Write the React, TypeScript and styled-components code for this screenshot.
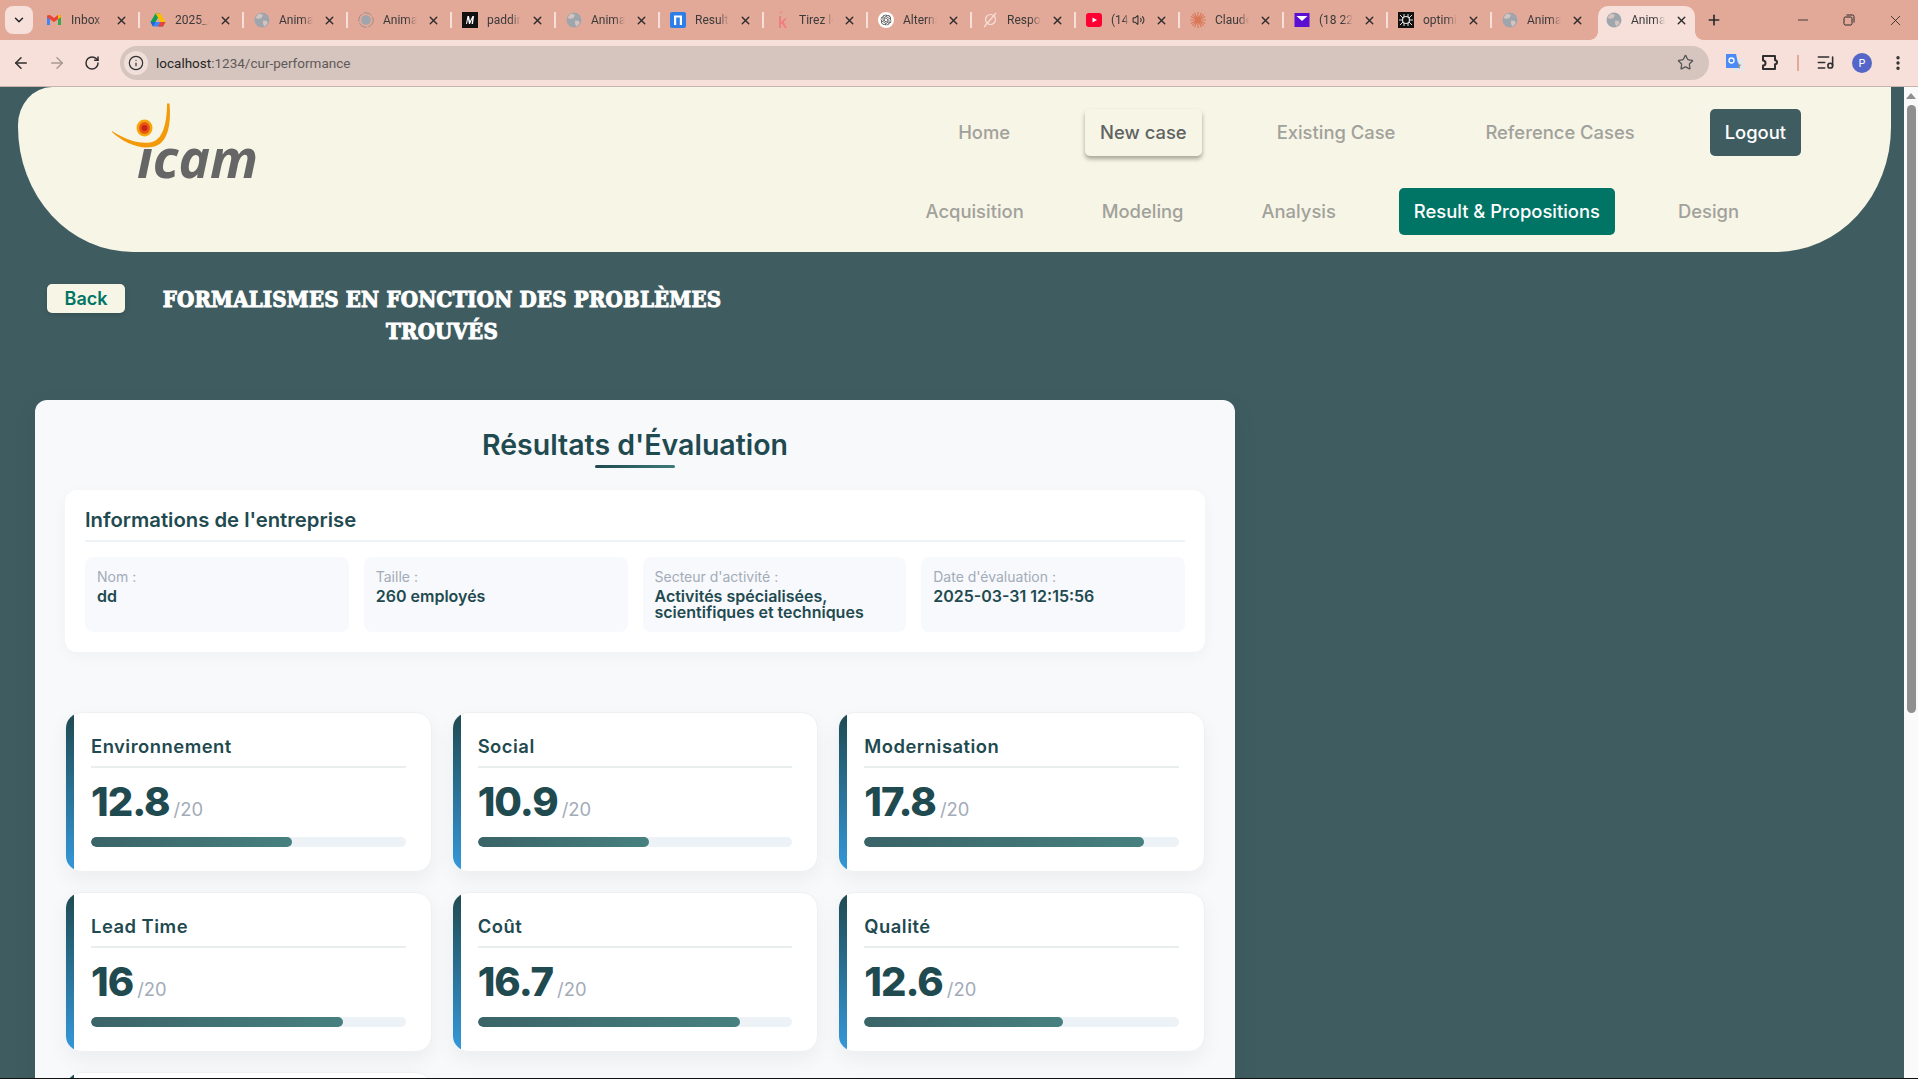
import React from "react";
import styled, { createGlobalStyle } from "styled-components";
import {
  ArrowLeft,
  ArrowRight,
  ChevronDown,
  Info,
  ListMusic,
  Minus,
  MoreVertical,
  Plus,
  RotateCw,
  Star,
  Volume2,
  X,
} from "lucide-react";
import { SiOpenai } from "react-icons/si";

const GlobalStyle = createGlobalStyle`
  html, body {
    margin: 0;
    height: 100%;
    overflow: hidden;
    background: #3f5d61;
  }
  * { box-sizing: border-box; }
`;

const Screen = styled.div`
  display: flex;
  flex-direction: column;
  width: 1918px;
  height: 1079px;
  overflow: hidden;
  font-family: Inter, "Liberation Sans", sans-serif;
  border-bottom: 1px solid #111;
`;

/* browser chrome */

const TabStrip = styled.div`
  display: flex;
  align-items: flex-end;
  height: 40px;
  flex: none;
  background: #e2a999;
  font-family: Roboto, "Liberation Sans", sans-serif;
`;

const TabSearch = styled.div`
  display: flex;
  align-items: center;
  justify-content: center;
  width: 28px;
  height: 28px;
  margin: 0 3px 6px 5px;
  border-radius: 8px;
  background: #f6e0d9;
  color: #222;
`;

const Tab = styled.div<{ $sep?: boolean }>`
  position: relative;
  display: flex;
  align-items: center;
  width: 104px;
  height: 40px;
  padding: 0 0 0 10px;
  font-size: 12px;
  color: #3a3a3a;

  &::after {
    content: "";
    display: ${({ $sep }) => ($sep ? "block" : "none")};
    position: absolute;
    right: 0;
    top: 12px;
    width: 2px;
    height: 16px;
    background: #f6e0d9;
  }
`;

const ActiveTab = styled(Tab)`
  width: 97px;
  height: 34px;
  margin: 0 3px 0 2px;
  padding: 0 0 6px 8px;
  background: #f6e0d9;
  border-radius: 10px 10px 0 0;

  &::before,
  &::after {
    content: "";
    display: block;
    position: absolute;
    top: auto;
    bottom: 0;
    width: 8px;
    height: 8px;
  }
  &::before {
    left: -8px;
    right: auto;
    background: radial-gradient(circle at 0 0, transparent 7.5px, #f6e0d9 8px);
  }
  &::after {
    right: -8px;
    background: radial-gradient(circle at 100% 0, transparent 7.5px, #f6e0d9 8px);
  }
`;

const TabIcon = styled.span`
  display: flex;
  width: 16px;
  height: 16px;
  flex: none;
  align-items: center;
  justify-content: center;
`;

const TabTitle = styled.span<{ $short?: boolean }>`
  width: ${({ $short }) => ($short ? 18 : 34)}px;
  margin-left: 9px;
  white-space: nowrap;
  overflow: hidden;
  -webkit-mask-image: linear-gradient(90deg, #000 70%, transparent);
  mask-image: linear-gradient(90deg, #000 70%, transparent);
`;

const TabAudio = styled.span`
  display: flex;
  margin-left: 3px;
  width: 13px;
  color: #333;
`;

const TabClose = styled.span`
  display: flex;
  margin-left: 10px;
  color: #2b2b2b;
`;

const NewTab = styled.div`
  display: flex;
  align-self: center;
  margin-left: 8px;
  color: #2b2b2b;
`;

const WindowControls = styled.div`
  display: flex;
  align-self: center;
  margin-left: auto;
  color: #2b2b2b;
`;

const WindowButton = styled.span`
  display: flex;
  align-items: center;
  justify-content: center;
  width: 46px;
`;

const Toolbar = styled.div`
  display: flex;
  align-items: center;
  height: 47px;
  flex: none;
  padding: 0 0 1px 12px;
  background: #f6e0d9;
  border-bottom: 1px solid #c9b4ad;
`;

const NavIcon = styled.span<{ $dim?: boolean; $gap?: number }>`
  display: flex;
  margin-right: ${({ $gap }) => $gap ?? 18}px;
  color: ${({ $dim }) => ($dim ? "#a99a94" : "#2f2f2f")};
`;

const Omnibox = styled.div`
  display: flex;
  align-items: center;
  width: 1589px;
  height: 34px;
  margin: 0 17px 0 20px;
  padding: 0 15px 0 4px;
  border-radius: 17px;
  background: #d6c5be;
  font-family: Roboto, "Liberation Sans", sans-serif;
  font-size: 13.5px;
  color: #5f5a58;
`;

const SiteInfo = styled.span`
  display: flex;
  align-items: center;
  justify-content: center;
  width: 24px;
  height: 24px;
  margin-right: 8px;
  border-radius: 50%;
  background: #f0dfd9;
  color: #2f2f2f;
`;

const Host = styled.span`
  color: #262626;
`;

const StarSlot = styled.span`
  display: flex;
  margin-left: auto;
  color: #555;
`;

const ToolbarDivider = styled.span`
  width: 2px;
  height: 16px;
  margin-right: 17px;
  background: #e2a999;
`;

const Avatar = styled.span`
  display: flex;
  align-items: center;
  justify-content: center;
  width: 20px;
  height: 20px;
  margin-right: 17px;
  border-radius: 50%;
  background: #5566c8;
  color: #fff;
  font-size: 11px;
`;

/* page */

const Viewport = styled.div`
  display: flex;
  flex: 1;
  min-height: 0;
`;

const Page = styled.div`
  flex: 1;
  min-width: 0;
  overflow: hidden;
  background: #3f5d61;
`;

const Scrollbar = styled.div`
  display: flex;
  flex-direction: column;
  align-items: center;
  width: 14px;
  flex: none;
  background: #fafafa;
  padding-top: 6px;
`;

const ScrollArrow = styled.div`
  width: 0;
  height: 0;
  border-left: 5px solid transparent;
  border-right: 5px solid transparent;
  border-bottom: 6px solid #8f8f8f;
`;

const ScrollThumb = styled.div`
  width: 9px;
  height: 608px;
  margin-top: 6px;
  border-radius: 5px;
  background: #8f8f8f;
`;

const Header = styled.header`
  display: flex;
  justify-content: space-between;
  height: 165px;
  margin: 0 13px 0 18px;
  padding: 22px 90px 0 78px;
  background: #f7f5e6;
  border-radius: 34px 0 115px 115px / 38px 0 125px 125px;
`;

const LogoMark = styled.svg`
  flex: none;
  margin-top: -10px;
`;

const Nav = styled.nav`
  display: flex;
  flex-direction: column;
  align-items: flex-end;
  gap: 32px;
`;

const NavRow = styled.div<{ $gap: number; $inset?: number }>`
  display: flex;
  gap: ${({ $gap }) => $gap}px;
  margin-right: ${({ $inset }) => $inset ?? 0}px;
`;

const NavButton = styled.a<{ $variant?: "raised" | "dark" | "green" }>`
  display: flex;
  align-items: center;
  height: 47px;
  padding: 0 15px 2px;
  border-radius: 5px;
  font-size: 18.4px;
  font-weight: 500;
  color: ${({ $variant }) =>
    $variant === "raised" ? "#5f6363" : $variant ? "#fff" : "#a1a19b"};
  background: ${({ $variant }) =>
    $variant === "dark" ? "#3f5d61" : $variant === "green" ? "#007566" : "transparent"};
  box-shadow: ${({ $variant }) =>
    $variant === "raised" ? "0 3px 4px rgba(70, 70, 50, 0.45)" : "none"};
`;

const TitleRow = styled.div`
  display: flex;
  align-items: flex-start;
  padding: 32px 0 0 47px;
`;

const BackButton = styled.button`
  width: 78px;
  height: 29px;
  border: 0;
  padding: 0;
  border-radius: 5px;
  background: #f7f5e6;
  color: #007566;
  font: 600 18px Inter, sans-serif;
  box-shadow: 0 2px 5px rgba(0, 0, 0, 0.15);
`;

const PageTitle = styled.h1`
  width: 590px;
  margin: -1px 0 0 22px;
  font-family: "DejaVu Serif", "Liberation Serif", serif;
  font-stretch: condensed;
  font-size: 22px;
  font-weight: 700;
  line-height: 32px;
  letter-spacing: 0.2px;
  text-align: center;
  color: #fff;
  -webkit-text-stroke: 1px #fff;
`;

const ResultsCard = styled.section`
  width: 1200px;
  margin: 53px 0 0 35px;
  padding: 28px 30px 30px;
  border-radius: 12px;
  background: #f8f9fb;
  box-shadow: 0 8px 24px rgba(0, 0, 0, 0.08);
`;

const ResultsTitle = styled.h2`
  position: relative;
  margin: 0 0 28px;
  font-size: 28.5px;
  font-weight: 600;
  line-height: 34px;
  text-align: center;
  color: #1f4a50;

  &::after {
    content: "";
    position: absolute;
    left: 50%;
    bottom: -6px;
    width: 80px;
    height: 3px;
    margin-left: -40px;
    border-radius: 2px;
    background: linear-gradient(90deg, #1f4a50, #3f7a7a);
  }
`;

const InfoBox = styled.div`
  padding: 18px 20px 20px;
  border-radius: 12px;
  background: #fff;
  box-shadow: 0 4px 16px rgba(0, 0, 0, 0.04);
`;

const InfoHeading = styled.h3`
  margin: 0 0 15px;
  padding-bottom: 8px;
  border-bottom: 2px solid #edf2f7;
  font-size: 20.3px;
  font-weight: 600;
  line-height: 24px;
  color: #1f4a50;
`;

const InfoGrid = styled.div`
  display: grid;
  grid-template-columns: repeat(4, 1fr);
  gap: 15px;
`;

const InfoTile = styled.div`
  min-height: 75px;
  padding: 11px 12px;
  border-radius: 8px;
  background: #f7f9fc;
`;

const InfoLabel = styled.div`
  margin-bottom: 3px;
  font-size: 14px;
  line-height: 17px;
  color: #a3abb8;
`;

const InfoValue = styled.div`
  font-size: 16px;
  font-weight: 600;
  line-height: 16px;
  color: #1f4a50;
`;

const MetricGrid = styled.div`
  display: grid;
  grid-template-columns: repeat(3, 1fr);
  gap: 20px;
  margin-top: 60px;
`;

const MetricCard = styled.article`
  position: relative;
  height: 160px;
  overflow: hidden;
  padding: 21px 25px 0;
  border: 1px solid #eef1f3;
  border-radius: 16px;
  background: #fff;
  box-shadow: 0 8px 20px rgba(0, 0, 0, 0.05);

  &::before {
    content: "";
    position: absolute;
    left: 0;
    top: 0;
    bottom: 0;
    width: 8px;
    background: linear-gradient(180deg, #1f4a50, #3498db);
  }
`;

const MetricName = styled.h4`
  margin: 0;
  padding-bottom: 8px;
  border-bottom: 2px solid #e9eeee;
  font-size: 18.4px;
  font-weight: 600;
  line-height: 24px;
  letter-spacing: 0.5px;
  color: #1f4a50;
`;

const MetricValue = styled.div`
  display: flex;
  align-items: baseline;
  gap: 4px;
  height: 44px;
  margin-top: 12px;
  line-height: 44px;
  font-size: 40px;
  font-weight: 800;
  letter-spacing: -1px;
  color: #1f4a50;
`;

const MetricMax = styled.span`
  font-size: 18.4px;
  font-weight: 400;
  letter-spacing: 0;
  line-height: 1;
  color: #a3abb8;
`;

const Track = styled.div`
  height: 10px;
  margin-top: 13px;
  border-radius: 5px;
  background: #edf2f7;
  overflow: hidden;
`;

const Fill = styled.div`
  height: 100%;
  border-radius: 5px;
  background: linear-gradient(90deg, #3a6468, #478080);
`;

type IconKind =
  | "gmail" | "drive" | "globe" | "loading" | "medium" | "nblue"
  | "k" | "openai" | "slash" | "youtube" | "claude" | "mail" | "optim";

const Globe = () => (
  <svg width="16" height="16" viewBox="0 0 16 16">
    <circle cx="8" cy="8" r="7.5" fill="#9fa5ad" />
    <path d="M5 1.5 9 3 7.5 6 4 7 1.5 5.5ZM9 8.5l4 .5 .5 2.5-3 3-1.5-2.5Z" fill="#d4c4bf" />
  </svg>
);

const Favicon = ({ kind }: { kind: IconKind }) => {
  switch (kind) {
    case "gmail":
      return (
        <svg width="16" height="16" viewBox="0 0 16 16">
          <path d="M1 4v9h3V7z" fill="#4285f4" />
          <path d="M15 4v9h-3V7z" fill="#34a853" />
          <path d="M1 3.5 4 3l4 3 4-3 3 .5V5L12 7.2 8 10 4 7.2 1 5z" fill="#ea4335" />
          <path d="M12 3l3 .5V5l-3 2.2z" fill="#fbbc04" />
        </svg>
      );
    case "drive":
      return (
        <svg width="16" height="16" viewBox="0 0 16 16">
          <path d="M5.5 1.5h5L5.5 10H.5z" fill="#0f9d58" />
          <path d="M10.5 1.5 15.5 10h-5l-5-8.5z" fill="#fbbc04" />
          <path d="M.5 10h15L13 14.5H3z" fill="#4285f4" />
          <path d="M.5 10h5L3 14.5z" fill="#1967d2" />
          <path d="M10.5 10h5L13 14.5H8z" fill="#ea4335" />
        </svg>
      );
    case "loading":
      return (
        <svg width="20" height="20" viewBox="0 0 20 20">
          <circle cx="10" cy="10" r="9" fill="none" stroke="#9a8d88" strokeWidth="1.2" strokeDasharray="11 2" />
          <circle cx="10" cy="10" r="6" fill="#9fa5ad" />
        </svg>
      );
    case "medium":
      return (
        <svg width="16" height="16" viewBox="0 0 16 16">
          <rect width="16" height="16" fill="#111" />
          <path d="M4 12 5.5 4H7l1 5 2.5-5H12l-1 8H9.6l.6-5L8 12H7L6 7l-1 5z" fill="#fff" />
        </svg>
      );
    case "nblue":
      return (
        <svg width="16" height="16" viewBox="0 0 16 16">
          <rect width="16" height="16" rx="2" fill="#2f7ee8" />
          <path d="M4 13V3.5h8V13H9.8V5.6H6.2V13z" fill="#fff" />
        </svg>
      );
    case "k":
      return (
        <svg width="16" height="18" viewBox="0 0 16 18">
          <path d="M7 0 8.5.5 7 3 6 2.6z" fill="#f08a8a" />
          <path d="M5 5h2v6l3.5-3.5H13L9.6 11 13 17h-2.4L8 12.6 7 13.6V17H5z" fill="#f07f7f" />
        </svg>
      );
    case "openai":
      return (
        <svg width="16" height="16" viewBox="0 0 16 16">
          <circle cx="8" cy="8" r="8" fill="#fff" />
          <g transform="translate(2.5 2.5)">
            <SiOpenai size={11} color="#333" />
          </g>
        </svg>
      );
    case "slash":
      return (
        <svg width="16" height="16" viewBox="0 0 16 16" fill="none" stroke="#f6e0d9" strokeWidth="1.2">
          <circle cx="8.5" cy="7.5" r="5" />
          <path d="M14 1 2 15" />
        </svg>
      );
    case "youtube":
      return (
        <svg width="16" height="16" viewBox="0 0 16 16">
          <rect width="16" height="14" y="1" rx="3" fill="#ff0033" />
          <path d="M6.5 5.5 11 8l-4.5 2.5z" fill="#fff" />
        </svg>
      );
    case "claude":
      return (
        <svg width="16" height="16" viewBox="0 0 16 16" stroke="#d97757" strokeWidth="1.1">
          <path d="M8 0v16M0 8h16M2.3 2.3l11.4 11.4M13.7 2.3 2.3 13.7M4.5 .8l7 14.4M11.5 .8l-7 14.4M.8 4.5l14.4 7M15.2 4.5l-14.4 7" />
        </svg>
      );
    case "mail":
      return (
        <svg width="16" height="16" viewBox="0 0 16 16">
          <rect width="15" height="14" x=".5" y="1" fill="#5b0fd0" />
          <path d="M2.5 4h11L8 9z" fill="#fff" />
        </svg>
      );
    case "optim":
      return (
        <svg width="16" height="16" viewBox="0 0 16 16">
          <rect width="16" height="16" fill="#111" />
          <circle cx="8" cy="8" r="3.5" fill="none" stroke="#ddd" strokeWidth="1.2" />
          <path d="M2 3l3 3M14 3l-3 3M2 13l3-3M14 13l-3-3M1 8h3M12 8h3M6 2v3M10 2v3M6 11v3M10 11v3" stroke="#ddd" strokeWidth="1" />
        </svg>
      );
    default:
      return <Globe />;
  }
};

const tabs: { icon: IconKind; title: string; audio?: boolean }[] = [
  { icon: "gmail", title: "Inbox" },
  { icon: "drive", title: "2025_Anima" },
  { icon: "globe", title: "Anima App" },
  { icon: "loading", title: "Anima App" },
  { icon: "medium", title: "padding" },
  { icon: "globe", title: "Anima App" },
  { icon: "nblue", title: "Result" },
  { icon: "k", title: "Tirez le" },
  { icon: "openai", title: "Alternative" },
  { icon: "slash", title: "Response" },
  { icon: "youtube", title: "(14", audio: true },
  { icon: "claude", title: "Claude" },
  { icon: "mail", title: "(18 228)" },
  { icon: "optim", title: "optimize" },
  { icon: "globe", title: "Anima App" },
];

const topNav = ["Home", "New case", "Existing Case", "Reference Cases", "Logout"];
const subNav = ["Acquisition", "Modeling", "Analysis", "Result & Propositions", "Design"];

const companyInfo = [
  { label: "Nom :", value: "dd" },
  { label: "Taille :", value: "260 employés" },
  { label: "Secteur d'activité :", value: "Activités spécialisées, scientifiques et techniques" },
  { label: "Date d'évaluation :", value: "2025-03-31 12:15:56" },
];

const metrics = [
  { name: "Environnement", score: 12.8 },
  { name: "Social", score: 10.9 },
  { name: "Modernisation", score: 17.8 },
  { name: "Lead Time", score: 16 },
  { name: "Coût", score: 16.7 },
  { name: "Qualité", score: 12.6 },
];

const Logo = () => (
  <LogoMark width="170" height="90" viewBox="0 0 170 90">
    <path
      d="M16 32c12 8 26 13 38 11.500 12-1.500 17-17 17-39l2.500 0c2 22-2 41-17 43.500-14 2.500-30-5-40.500-15z"
      fill="#f39a0b"
    />
    <ellipse cx="48.500" cy="29" rx="8" ry="8.500" fill="#f6a50f" />
    <ellipse cx="48.500" cy="29" rx="5.500" ry="6" fill="#e8590f" />
    <circle cx="48.500" cy="29" r="3" fill="#c8201c" />
    <text
      x="41"
      y="79"
      textLength="121"
      lengthAdjust="spacingAndGlyphs"
      fontFamily="'Open Sans', sans-serif"
      fontStyle="italic"
      fontWeight="700"
      fontSize="53"
      fill="#666"
    >
      ıcam
    </text>
  </LogoMark>
);

export default function App() {
  return (
    <Screen>
      <GlobalStyle />
      <TabStrip>
        <TabSearch>
          <ChevronDown size={14} strokeWidth={2.5} />
        </TabSearch>
        {tabs.map((tab, i) => (
          <Tab key={i} $sep={i < tabs.length - 1}>
            <TabIcon>
              <Favicon kind={tab.icon} />
            </TabIcon>
            <TabTitle $short={tab.audio}>{tab.title}</TabTitle>
            {tab.audio && (
              <TabAudio>
                <Volume2 size={14} />
              </TabAudio>
            )}
            <TabClose>
              <X size={13} strokeWidth={2.6} />
            </TabClose>
          </Tab>
        ))}
        <ActiveTab>
          <TabIcon>
            <Globe />
          </TabIcon>
          <TabTitle>Anima App</TabTitle>
          <TabClose>
            <X size={13} strokeWidth={2.6} />
          </TabClose>
        </ActiveTab>
        <NewTab>
          <Plus size={16} strokeWidth={2.5} />
        </NewTab>
        <WindowControls>
          <WindowButton>
            <Minus size={16} strokeWidth={1.3} />
          </WindowButton>
          <WindowButton>
            <svg width="12" height="12" viewBox="0 0 12 12" fill="none" stroke="currentColor" strokeWidth="1">
              <rect x="1" y="3" width="8" height="8" rx="1.5" />
              <path d="M3.5 1h6A1.500 1.500 0 0 1 11 2.500v6" />
            </svg>
          </WindowButton>
          <WindowButton>
            <X size={17} strokeWidth={1.2} />
          </WindowButton>
        </WindowControls>
      </TabStrip>

      <Toolbar>
        <NavIcon>
          <ArrowLeft size={18} strokeWidth={2} />
        </NavIcon>
        <NavIcon $dim>
          <ArrowRight size={18} strokeWidth={2} />
        </NavIcon>
        <NavIcon $gap={0}>
          <RotateCw size={16} strokeWidth={2.2} />
        </NavIcon>
        <Omnibox>
          <SiteInfo>
            <Info size={16} strokeWidth={1.8} />
          </SiteInfo>
          <Host>localhost</Host>:1234/cur-performance
          <StarSlot>
            <Star size={17} strokeWidth={1.8} />
          </StarSlot>
        </Omnibox>
        <NavIcon $gap={17}>
          <svg width="18" height="18" viewBox="0 0 18 18">
            <rect x="7" y="5" width="11" height="12" fill="#e6e6e6" />
            <path d="M0 0h10l3 14H0z" fill="#4c8bf5" />
            <circle cx="5.500" cy="6.500" r="2.500" fill="none" stroke="#fff" strokeWidth="1.3" />
            <path d="M12 8l1 2.500 2.500.2-2 1.600.7 2.500-2.200-1.400" fill="#8a8a8a" />
          </svg>
        </NavIcon>
        <NavIcon $gap={17}>
          <svg width="19" height="19" viewBox="0 0 19 19" fill="none" stroke="currentColor" strokeWidth="2" strokeLinejoin="round">
            <path d="M2 3h12v4.200a2 2 0 0 1 0 4V16H2v-3.500a2.500 2.500 0 0 0 0-5z" />
          </svg>
        </NavIcon>
        <ToolbarDivider />
        <NavIcon $gap={17}>
          <ListMusic size={19} strokeWidth={2} />
        </NavIcon>
        <Avatar>P</Avatar>
        <NavIcon $gap={0}>
          <MoreVertical size={18} strokeWidth={2.5} />
        </NavIcon>
      </Toolbar>

      <Viewport>
        <Page>
          <Header>
            <Logo />
            <Nav>
              <NavRow $gap={60}>
                {topNav.map((item) => (
                  <NavButton
                    key={item}
                    $variant={item === "New case" ? "raised" : item === "Logout" ? "dark" : undefined}
                  >
                    {item}
                  </NavButton>
                ))}
              </NavRow>
              <NavRow $gap={48} $inset={47}>
                {subNav.map((item) => (
                  <NavButton key={item} $variant={item.startsWith("Result") ? "green" : undefined}>
                    {item}
                  </NavButton>
                ))}
              </NavRow>
            </Nav>
          </Header>

          <TitleRow>
            <BackButton>Back</BackButton>
            <PageTitle>FORMALISMES EN FONCTION DES PROBLÈMES TROUVÉS</PageTitle>
          </TitleRow>

          <ResultsCard>
            <ResultsTitle>Résultats d'Évaluation</ResultsTitle>
            <InfoBox>
              <InfoHeading>Informations de l'entreprise</InfoHeading>
              <InfoGrid>
                {companyInfo.map((info) => (
                  <InfoTile key={info.label}>
                    <InfoLabel>{info.label}</InfoLabel>
                    <InfoValue>{info.value}</InfoValue>
                  </InfoTile>
                ))}
              </InfoGrid>
            </InfoBox>
            <MetricGrid>
              {metrics.map((metric) => (
                <MetricCard key={metric.name}>
                  <MetricName>{metric.name}</MetricName>
                  <MetricValue>
                    {metric.score}
                    <MetricMax>/20</MetricMax>
                  </MetricValue>
                  <Track>
                    <Fill style={{ width: `${(metric.score / 20) * 100}%` }} />
                  </Track>
                </MetricCard>
              ))}
              <MetricCard />
            </MetricGrid>
          </ResultsCard>
        </Page>
        <Scrollbar>
          <ScrollArrow />
          <ScrollThumb />
        </Scrollbar>
      </Viewport>
    </Screen>
  );
}
